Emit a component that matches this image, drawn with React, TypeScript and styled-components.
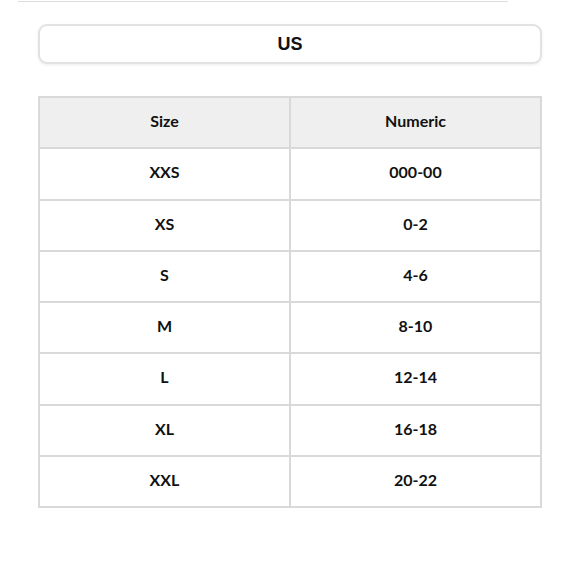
import React from "react";
import styled, { createGlobalStyle } from "styled-components";

const Global = createGlobalStyle`
  html, body { margin: 0; padding: 0; background: #ffffff; }
  body { font-family: "Lato", "Noto Sans", sans-serif; color: #111; }
`;

const Page = styled.div`
  width: 580px;
  height: 580px;
  box-sizing: border-box;
  padding-top: 1px;
  display: flex;
  flex-direction: column;
  align-items: center;
`;

const TopRule = styled.div`
  align-self: flex-start;
  width: 490px;
  margin-left: 18px;
  border-top: 1px solid #dedede;
`;

const RegionButton = styled.div`
  margin-top: 22px;
  width: 504px;
  height: 40px;
  box-sizing: border-box;
  border: 2px solid #e2e2e2;
  border-radius: 9px;
  box-shadow: 0 1px 3px rgba(0, 0, 0, 0.08);
  background: #fff;
  display: flex;
  align-items: center;
  justify-content: center;
  font-family: "Liberation Sans", Arial, sans-serif;
  font-weight: 700;
  font-size: 18px;
  color: #111;
`;

const Table = styled.div`
  margin-top: 32px;
  width: 504px;
  box-sizing: border-box;
  display: grid;
  grid-template-columns: 1fr 1fr;
  grid-template-rows: repeat(8, 49.25px);
  gap: 2px;
  padding: 2px;
  background: #d9d9d9;
`;

const Cell = styled.div<{ $head?: boolean }>`
  background: ${(p) => (p.$head ? "#efefef" : "#ffffff")};
  display: flex;
  align-items: center;
  justify-content: center;
  padding-bottom: 4px;
  font-weight: 700;
  font-size: 16px;
  color: #111;
`;

const rows: [string, string][] = [
  ["XXS", "000-00"],
  ["XS", "0-2"],
  ["S", "4-6"],
  ["M", "8-10"],
  ["L", "12-14"],
  ["XL", "16-18"],
  ["XXL", "20-22"],
];

export default function App() {
  return (
    <>
      <Global />
      <Page>
        <TopRule />
        <RegionButton>US</RegionButton>
        <Table>
          <Cell $head>Size</Cell>
          <Cell $head>Numeric</Cell>
          {rows.map(([s, n]) => (
            <React.Fragment key={s}>
              <Cell>{s}</Cell>
              <Cell>{n}</Cell>
            </React.Fragment>
          ))}
        </Table>
      </Page>
    </>
  );
}
